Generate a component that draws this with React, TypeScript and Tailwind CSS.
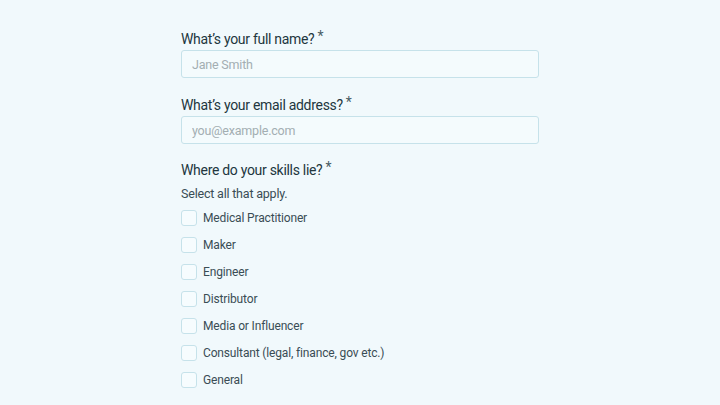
import { useState } from 'react';

const skills = [
  'Medical Practitioner',
  'Maker',
  'Engineer',
  'Distributor',
  'Media or Influencer',
  'Consultant (legal, finance, gov etc.)',
  'General',
];

function Label({ children }: { children: string }) {
  return (
    <div className="flex items-start text-[14px] leading-[20px] tracking-[-0.3px] text-[#22363e]">
      <span>{children}</span>
      <span className="ml-[3px] text-[14px] leading-[14px] text-[#4a5d65]">*</span>
    </div>
  );
}

export default function App() {
  const [checked, setChecked] = useState<Record<string, boolean>>({});

  return (
    <div
      className="min-h-[405px] w-full bg-[#f1f9fc] flex justify-center"
      style={{ fontFamily: 'Roboto, "Noto Sans", sans-serif' }}
    >
      <div className="w-[358px] pt-[29px] flex flex-col">
        {/* Name */}
        <Label>What’s your full name?</Label>
        <input
          className="mt-[1px] h-[28px] w-full rounded-[3px] border border-[#c6e2ea] bg-[#f4fbfd] px-[10px] text-[12.5px] tracking-[-0.2px] text-[#22363e] outline-none placeholder:text-[#a3aeb2]"
          placeholder="Jane Smith"
        />

        {/* Email */}
        <div className="mt-[17px]">
          <Label>What’s your email address?</Label>
        </div>
        <input
          className="mt-[1px] h-[28px] w-full rounded-[3px] border border-[#c6e2ea] bg-[#f4fbfd] px-[10px] text-[12.5px] tracking-[-0.2px] text-[#22363e] outline-none placeholder:text-[#a3aeb2]"
          placeholder="you@example.com"
        />

        {/* Skills */}
        <div className="mt-[16px]">
          <Label>Where do your skills lie?</Label>
        </div>
        <div className="mt-[5px] text-[12.5px] leading-[18px] tracking-[-0.2px] text-[#3a4d55]">Select all that apply.</div>
        <div className="mt-[7px] flex flex-col gap-[11px]">
          {skills.map((s) => (
            <label key={s} className="flex items-center gap-[6px] text-[12px] leading-[16px] tracking-[-0.15px] text-[#3a4d55]">
              <input
                type="checkbox"
                className="h-[16px] w-[16px] appearance-none rounded-[3px] border border-[#c6e2ea] bg-[#f6fcfe] checked:bg-[#3a4d55]"
                checked={!!checked[s]}
                onChange={(e) => setChecked({ ...checked, [s]: e.target.checked })}
              />
              <span>{s}</span>
            </label>
          ))}
        </div>
      </div>
    </div>
  );
}
